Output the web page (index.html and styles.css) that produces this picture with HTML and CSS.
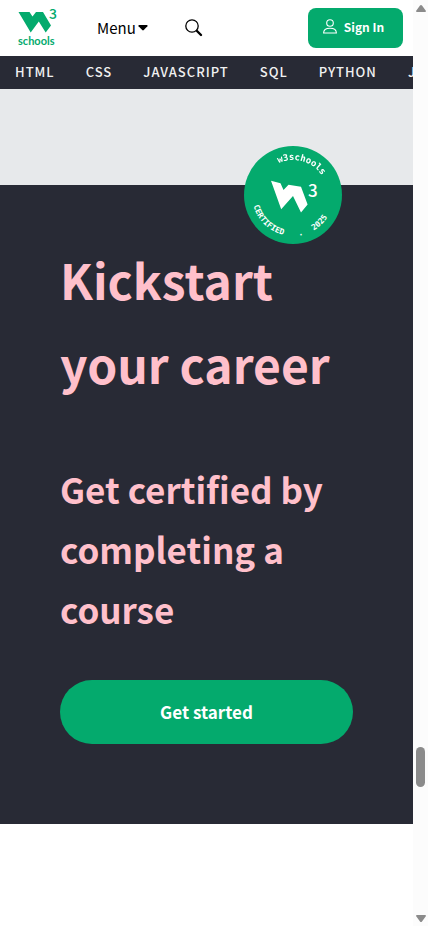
FILE: index.html
```html
<!DOCTYPE html>
<html lang="en">
<head>
<meta charset="utf-8">
<meta name="viewport" content="width=device-width, initial-scale=1">
<title>W3Schools</title>
<link rel="stylesheet" href="styles.css">
</head>
<body>
<div class="page">
  <header class="topbar">
    <a class="logo" href="#" aria-label="W3Schools home">
      <svg width="44" height="44" viewBox="0 0 44 44" aria-hidden="true">
        <path d="M2.500 6H13.500L16.500 10.500L20 6H27L35 19.500L29.700 26.500L22.800 15.500L14.700 26.500Z"/>
        <text class="logo-three" x="33" y="13">3</text>
        <text class="logo-name" x="2" y="39">schools</text>
      </svg>
    </a>
    <button class="menu" type="button">Menu
      <svg width="10" height="6" viewBox="0 0 10 6" aria-hidden="true"><path d="M1 0H9Q10 .4 9.4 1.2L5.8 5.1Q5 5.8 4.2 5.1L.6 1.2Q0 .4 1 0Z"/></svg>
    </button>
    <button class="search" type="button" aria-label="Search">
      <svg width="18" height="18" viewBox="0 0 18 18" aria-hidden="true"><circle cx="7" cy="7" r="6.2"/><path class="handle" d="M12 12L16 16"/></svg>
    </button>
    <button class="signin" type="button">
      <svg width="14" height="15" viewBox="0 0 14 15" aria-hidden="true"><circle cx="7" cy="4" r="3.3"/><path d="M.6 14Q.6 9.2 7 9.2T13.4 14Z"/></svg>
      Sign In
    </button>
  </header>
  <nav class="topics">
    <a href="#">HTML</a><a href="#">CSS</a><a href="#">JAVASCRIPT</a><a href="#">SQL</a><a href="#">PYTHON</a><a href="#">JAVA</a>
  </nav>
  <main>
    <div class="band"></div>
    <section class="hero">
      <svg class="badge" viewBox="0 0 98 98" role="img" aria-label="W3Schools certified 2025">
        <defs>
          <path id="arc-top" d="M14 49A35 35 0 0 1 84 49"/>
          <path id="arc-bottom" d="M8 49A41 41 0 0 0 90 49"/>
        </defs>
        <circle class="disc" cx="49" cy="49" r="49"/>
        <text class="ring soft"><textPath href="#arc-top" startOffset="40">w3schools</textPath></text>
        <text class="ring small"><textPath href="#arc-bottom" startOffset="11">CERTIFIED</textPath></text>
        <text class="ring small"><textPath href="#arc-bottom" startOffset="70">.</textPath></text>
        <text class="ring small"><textPath href="#arc-bottom" startOffset="86">2025</textPath></text>
        <path class="mark" d="M27 34.700L36.500 37.200L39.500 44L44.500 38.700L57 40.700L63.600 58.500L57 66.500L49 50L37.200 63.300Z"/>
        <text class="mark-three" x="64" y="51">3</text>
      </svg>
      <h1>Kickstart your career</h1>
      <h2>Get certified by completing a course</h2>
      <a class="start" href="#">Get started</a>
    </section>
  </main>
</div>
<div class="scrollbar" aria-hidden="true">
  <svg width="10" height="8" viewBox="0 0 10 8"><path d="M5 0Q5.600 0 6 .6L10 6Q10 7 9 7H1Q0 7 0 6L4 .6Q4.400 0 5 0Z"/></svg>
  <div class="track"><div class="thumb"></div></div>
  <svg width="10" height="8" viewBox="0 0 10 8"><path d="M5 8Q5.600 8 6 7.400L10 2Q10 1 9 1H1Q0 1 0 2L4 7.400Q4.400 8 5 8Z"/></svg>
</div>
</body>
</html>
```
FILE: styles.css
```css
* { box-sizing: border-box; }
body {
  margin: 0;
  display: flex;
  min-height: 100vh;
  background: #fff;
  color: #000;
  font-family: "Noto Sans CJK SC", "Noto Sans", sans-serif;
}
button { border: 0; padding: 0; background: none; color: inherit; font: inherit; }
a { color: inherit; text-decoration: none; }
svg { display: block; flex: none; }
.page { flex: 1; min-width: 0; }

.topbar { display: flex; align-items: center; height: 56px; padding: 0 10px 0 16px; }
.logo svg { fill: #04aa6d; overflow: visible; }
.logo-three { font: 500 14px "Noto Sans CJK SC", sans-serif; }
.logo-name { font: 700 11px Lato, sans-serif; }
.menu { display: flex; align-items: center; gap: 2px; margin-left: 37px; font-size: 15px; line-height: 24px; }
.search { margin-left: 37px; }
.search svg { fill: none; stroke: #000; stroke-width: 1.3; }
.search .handle { stroke-width: 2.4; stroke-linecap: round; }
.signin {
  display: flex;
  align-items: center;
  justify-content: center;
  gap: 7px;
  width: 95px;
  height: 40px;
  margin-left: auto;
  padding: 0 4px 3px 0;
  border-radius: 8px;
  background: #04aa6d;
  color: #fff;
  font-size: 12px;
  font-weight: 700;
}
.signin svg { fill: none; stroke: #fff; stroke-width: 1.1; }

.topics {
  display: flex;
  gap: 31px;
  height: 33px;
  padding-left: 15px;
  overflow: hidden;
  background: #282a35;
  color: #f1f1f1;
  font-size: 13px;
  font-weight: 500;
  line-height: 31px;
  letter-spacing: 1px;
}
.band { height: 96px; background: #e7e9eb; }
.hero { position: relative; padding: 52px 60px 80px; background: #282a35; color: #ffc0cb; }
.badge { position: absolute; top: -39px; right: 71px; width: 98px; height: 98px; }
.disc { fill: #04aa6d; }
.ring { fill: #fff; font: 700 9px "DejaVu Sans Mono", monospace; }
.small { font-size: 8px; }
.soft { filter: blur(0.5px); }
.mark { fill: #fff; }
.mark-three { fill: #fff; font: 500 17px "Noto Sans CJK SC", sans-serif; }
h1, h2 { margin: 0; font-weight: 600; }
h1 { font-size: 48px; line-height: 84px; }
h2 { margin-top: 54px; font-size: 35px; line-height: 60px; }
.start {
  display: block;
  margin-top: 41px;
  border-radius: 32px;
  background: #04aa6d;
  color: #fff;
  font-size: 17px;
  font-weight: 700;
  line-height: 64px;
  text-align: center;
}

.scrollbar {
  display: flex;
  flex-direction: column;
  align-items: center;
  width: 15px;
  padding: 5px 0 4px;
  background: #fcfcfc;
  fill: #8b8b8b;
}
.track { display: flex; flex-direction: column; flex: 1; }
.track::before { content: ""; flex: 734; }
.track::after { content: ""; flex: 127; }
.thumb { width: 9px; height: 40px; border-radius: 5px; background: #8b8b8b; }
```
